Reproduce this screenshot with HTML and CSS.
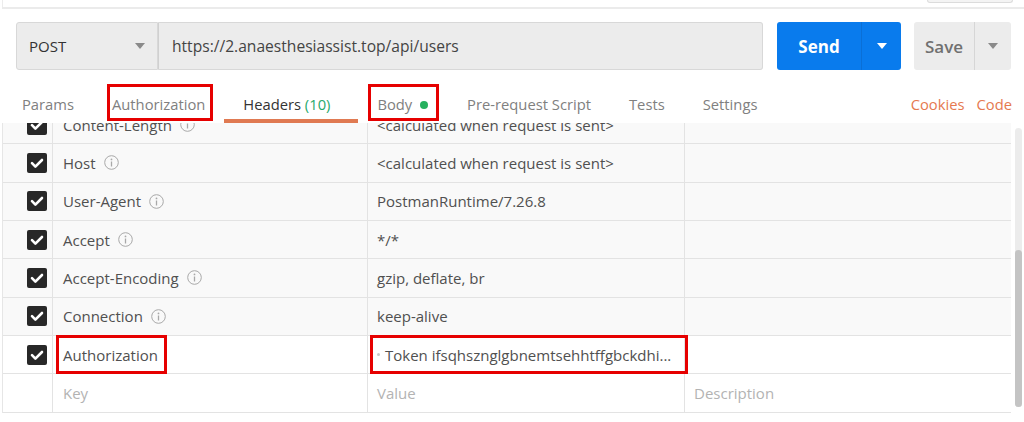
FILE: index.html
```html
<!DOCTYPE html>
<html>
<head>
<meta charset="utf-8">
<link rel="stylesheet" href="styles.css">
</head>
<body>
<div class="topbar"><div class="topbox"></div></div>
<div class="request">
  <div class="method"><span>POST</span><svg class="caret" width="10" height="6" viewBox="0 0 10 6"><path d="M0 0h10L5 6z" fill="#8a8a8a"/></svg></div>
  <div class="url">https://2.anaesthesiassist.top/api/users</div>
  <div class="send"><span class="send-label">Send</span><span class="send-drop"><svg width="10" height="6" viewBox="0 0 10 6"><path d="M0 0h10L5 6z" fill="#fff"/></svg></span></div>
  <div class="save"><span class="save-label">Save</span><span class="save-drop"><svg width="10" height="6" viewBox="0 0 10 6"><path d="M0 0h10L5 6z" fill="#8a8a8a"/></svg></span></div>
</div>
<div class="tabs">
  <div class="tab">Params</div>
  <div class="tab marked marked-auth">Authorization</div>
  <div class="tab active">Headers <span class="count">(10)</span></div>
  <div class="tab marked marked-body body-tab">Body <span class="dot"></span></div>
  <div class="tab">Pre-request Script</div>
  <div class="tab">Tests</div>
  <div class="tab">Settings</div>
  <div class="tab-links"><span class="link">Cookies</span><span class="link">Code</span></div>
</div>
<div class="table-wrap">
  <div class="table">
    <div class="row auto"><div class="c chk"><svg width="20" height="20" viewBox="0 0 20 20"><rect width="20" height="20" rx="2" fill="#282828"/><path d="M5 10.2l3.4 3.4L15 7" stroke="#fff" stroke-width="2.6" fill="none" stroke-linecap="round" stroke-linejoin="round"/></svg></div><div class="c key">Content-Length <svg class="info" width="15" height="15" viewBox="0 0 15 15"><circle cx="7.5" cy="7.5" r="6.8" stroke="#a8a8a8" fill="none"/><circle cx="7.5" cy="4.4" r="0.9" fill="#a8a8a8"/><path d="M7.5 6.5v5" stroke="#a8a8a8" stroke-width="1.3"/></svg></div><div class="c val">&lt;calculated when request is sent&gt;</div><div class="c desc"></div></div>
    <div class="row auto"><div class="c chk"><svg width="20" height="20" viewBox="0 0 20 20"><rect width="20" height="20" rx="2" fill="#282828"/><path d="M5 10.2l3.4 3.4L15 7" stroke="#fff" stroke-width="2.6" fill="none" stroke-linecap="round" stroke-linejoin="round"/></svg></div><div class="c key">Host <svg class="info" width="15" height="15" viewBox="0 0 15 15"><circle cx="7.5" cy="7.5" r="6.8" stroke="#a8a8a8" fill="none"/><circle cx="7.5" cy="4.4" r="0.9" fill="#a8a8a8"/><path d="M7.5 6.5v5" stroke="#a8a8a8" stroke-width="1.3"/></svg></div><div class="c val">&lt;calculated when request is sent&gt;</div><div class="c desc"></div></div>
    <div class="row auto"><div class="c chk"><svg width="20" height="20" viewBox="0 0 20 20"><rect width="20" height="20" rx="2" fill="#282828"/><path d="M5 10.2l3.4 3.4L15 7" stroke="#fff" stroke-width="2.6" fill="none" stroke-linecap="round" stroke-linejoin="round"/></svg></div><div class="c key">User-Agent <svg class="info" width="15" height="15" viewBox="0 0 15 15"><circle cx="7.5" cy="7.5" r="6.8" stroke="#a8a8a8" fill="none"/><circle cx="7.5" cy="4.4" r="0.9" fill="#a8a8a8"/><path d="M7.5 6.5v5" stroke="#a8a8a8" stroke-width="1.3"/></svg></div><div class="c val">PostmanRuntime/7.26.8</div><div class="c desc"></div></div>
    <div class="row auto"><div class="c chk"><svg width="20" height="20" viewBox="0 0 20 20"><rect width="20" height="20" rx="2" fill="#282828"/><path d="M5 10.2l3.4 3.4L15 7" stroke="#fff" stroke-width="2.6" fill="none" stroke-linecap="round" stroke-linejoin="round"/></svg></div><div class="c key">Accept <svg class="info" width="15" height="15" viewBox="0 0 15 15"><circle cx="7.5" cy="7.5" r="6.8" stroke="#a8a8a8" fill="none"/><circle cx="7.5" cy="4.4" r="0.9" fill="#a8a8a8"/><path d="M7.5 6.5v5" stroke="#a8a8a8" stroke-width="1.3"/></svg></div><div class="c val">*/*</div><div class="c desc"></div></div>
    <div class="row auto"><div class="c chk"><svg width="20" height="20" viewBox="0 0 20 20"><rect width="20" height="20" rx="2" fill="#282828"/><path d="M5 10.2l3.4 3.4L15 7" stroke="#fff" stroke-width="2.6" fill="none" stroke-linecap="round" stroke-linejoin="round"/></svg></div><div class="c key">Accept-Encoding <svg class="info" width="15" height="15" viewBox="0 0 15 15"><circle cx="7.5" cy="7.5" r="6.8" stroke="#a8a8a8" fill="none"/><circle cx="7.5" cy="4.4" r="0.9" fill="#a8a8a8"/><path d="M7.5 6.5v5" stroke="#a8a8a8" stroke-width="1.3"/></svg></div><div class="c val">gzip, deflate, br</div><div class="c desc"></div></div>
    <div class="row auto"><div class="c chk"><svg width="20" height="20" viewBox="0 0 20 20"><rect width="20" height="20" rx="2" fill="#282828"/><path d="M5 10.2l3.4 3.4L15 7" stroke="#fff" stroke-width="2.6" fill="none" stroke-linecap="round" stroke-linejoin="round"/></svg></div><div class="c key">Connection <svg class="info" width="15" height="15" viewBox="0 0 15 15"><circle cx="7.5" cy="7.5" r="6.8" stroke="#a8a8a8" fill="none"/><circle cx="7.5" cy="4.4" r="0.9" fill="#a8a8a8"/><path d="M7.5 6.5v5" stroke="#a8a8a8" stroke-width="1.3"/></svg></div><div class="c val">keep-alive</div><div class="c desc"></div></div>
    <div class="row"><div class="c chk"><svg width="20" height="20" viewBox="0 0 20 20"><rect width="20" height="20" rx="2" fill="#282828"/><path d="M5 10.2l3.4 3.4L15 7" stroke="#fff" stroke-width="2.6" fill="none" stroke-linecap="round" stroke-linejoin="round"/></svg></div><div class="c key marked marked-key">Authorization</div><div class="c val marked marked-val"><span class="cursor"></span>Token ifsqhsznglgbnemtsehhtffgbckdhi...</div><div class="c desc"></div></div>
    <div class="row"><div class="c chk"></div><div class="c key ph">Key</div><div class="c val ph">Value</div><div class="c desc ph">Description</div></div>
  </div>
  <div class="scrollbar"><div class="thumb"></div></div>
</div>
</body>
</html>
```
FILE: styles.css
```css
*, *::before, *::after { box-sizing: border-box; }
html, body { margin: 0; padding: 0; }
body {
  width: 1024px;
  height: 422px;
  overflow: hidden;
  background: #fff;
  font-family: "Open Sans", "Noto Sans", sans-serif;
  color: #505050;
}
.topbar {
  height: 9px;
  border-bottom: 2px solid #ebebeb;
  border-left: 1px solid #ececec;
  margin-left: 2px;
  display: flex;
  justify-content: flex-end;
  padding-right: 11px;
}
.topbox {
  width: 86px;
  height: 3px;
  border: 1px solid #dcdcdc;
  border-top: none;
  border-radius: 0 0 3px 3px;
  background: #f4f4f4;
}
.request {
  display: flex;
  height: 48px;
  margin: 13px 13px 0 16px;
}
.method {
  width: 142px;
  display: flex;
  align-items: center;
  justify-content: space-between;
  padding: 0 12px 0 12px;
  background: #ececec;
  border: 1px solid #d8d8d8;
  border-radius: 3px 0 0 3px;
  font-size: 15px;
  color: #333;
}
.url {
  flex: 1;
  display: flex;
  align-items: center;
  padding-left: 13px;
  background: #ececec;
  border: 1px solid #d8d8d8;
  border-left: 1px solid #d0d0d0;
  border-radius: 0 3px 3px 0;
  font-size: 15.6px;
  color: #444;
}
.send {
  width: 124px;
  margin-left: 14px;
  display: flex;
  background: #097bed;
  border-radius: 3px;
  color: #fff;
}
.send-label {
  flex: 1;
  display: flex;
  align-items: center;
  justify-content: center;
  font-weight: 700;
  font-size: 17px;
  border-right: 1px solid #0a6fd6;
}
.send-drop, .save-drop {
  width: 39px;
  display: flex;
  align-items: center;
  justify-content: center;
}
.save {
  width: 97px;
  margin-left: 13px;
  display: flex;
  background: #ececec;
  border-radius: 3px;
  color: #707070;
}
.save-label {
  flex: 1;
  display: flex;
  align-items: center;
  justify-content: center;
  font-weight: 600;
  font-size: 17px;
  border-right: 1px solid #d6d6d6;
}
.save-drop { width: 36px; }
.tabs {
  height: 53px;
  display: flex;
  align-items: flex-end;
  padding-left: 3px;
  padding-right: 12px;
  background: #fff;
  position: relative;
  z-index: 2;
}
.tab {
  height: 38px;
  line-height: 38px;
  padding: 0 19px;
  font-size: 14.75px;
  color: #808080;
  white-space: nowrap;
  position: relative;
}
.tab.active {
  color: #333;
  box-shadow: inset 0 -4px 0 #e07a52;
  padding-right: 28px;
}
.tab.body-tab { padding-right: 20px; }
.count { color: #26a96c; }
.dot {
  display: inline-block;
  width: 8px;
  height: 8px;
  border-radius: 50%;
  background: #26b15e;
  margin-left: 4px;
  vertical-align: 1px;
}
.tab-links {
  margin-left: auto;
  height: 38px;
  line-height: 38px;
  font-size: 14.75px;
  display: flex;
  gap: 12px;
}
.link { color: #e5794f; }
.marked::after {
  content: "";
  position: absolute;
  border: 3px solid #e60000;
  pointer-events: none;
}
.marked-auth::after { left: 14px; right: 11px; top: -1px; bottom: 2px; }
.marked-body::after { left: 10px; right: 9px; top: -1px; bottom: 2px; }
.table-wrap {
  height: 299px;
  display: flex;
  overflow: hidden;
  padding-left: 2px;
}
.table {
  width: 1009px;
  margin-top: -17px;
  border-left: 1px solid #e6e6e6;
  align-self: flex-start;
}
.row {
  display: grid;
  grid-template-columns: 50px 315px 317px 1fr;
  height: 38.33px;
  border-bottom: 1px solid #e3e3e3;
  background: #fff;
}
.row.auto { background: #f9f9f9; }
.c {
  display: flex;
  align-items: center;
  font-size: 15px;
  white-space: nowrap;
  position: relative;
}
.chk {
  justify-content: flex-start;
  padding-left: 24px;
  border-right: 1px solid #e3e3e3;
}
.chk svg { display: block; }
.key {
  padding-left: 10px;
  border-right: 1px solid #e3e3e3;
}
.val {
  padding-left: 9px;
  border-right: 1px solid #e3e3e3;
}
.desc { padding-left: 9px; }
.info { margin-left: 8px; }
.ph { color: #b3b3b3; }
.cursor {
  width: 3px;
  height: 3px;
  background: #c8c8c8;
  border-radius: 50%;
  margin-right: 5px;
}
.marked-key::after { left: 3px; width: 111px; top: -1px; bottom: -1px; }
.marked-val::after { left: 2px; right: -4px; top: -1px; bottom: -1px; }
.scrollbar {
  width: 7px;
  height: 279px;
  margin: 5px 0 0 4px;
  background: #ececec;
  border-radius: 4px;
  display: flex;
  flex-direction: column;
  justify-content: flex-end;
}
.thumb {
  height: 157px;
  background: #c4c4c4;
  border-radius: 4px;
}
```
